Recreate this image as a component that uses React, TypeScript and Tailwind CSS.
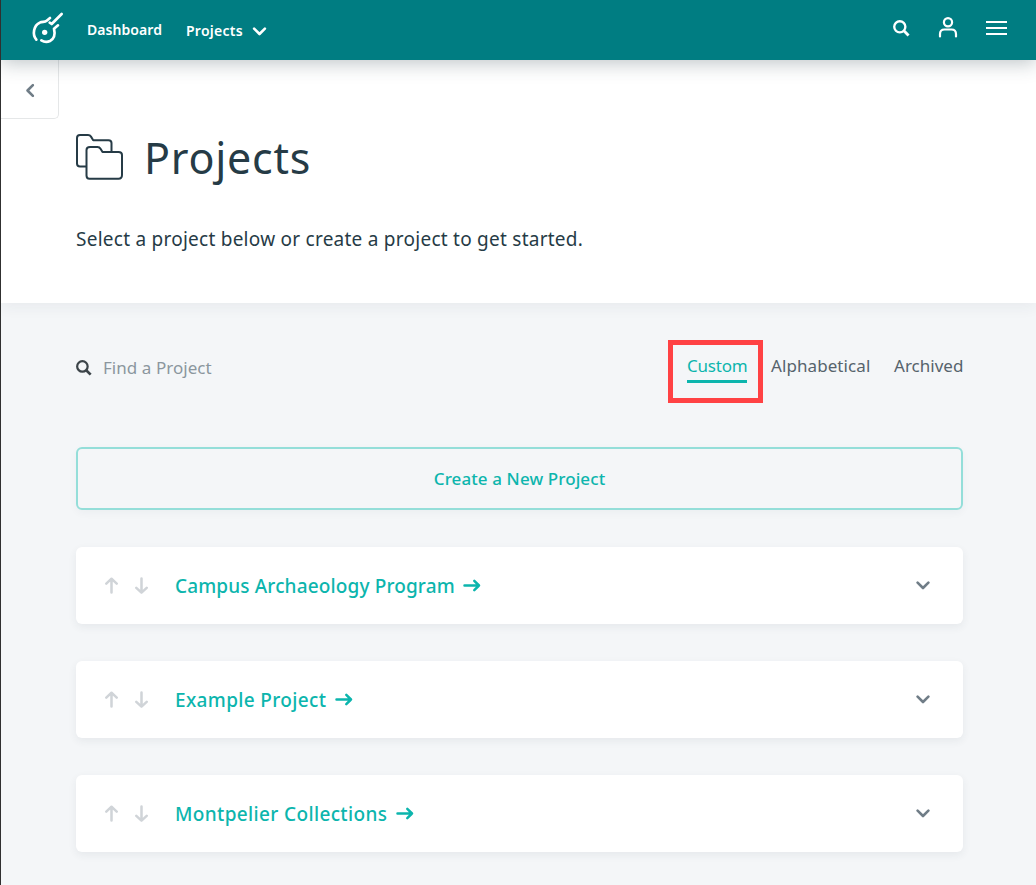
import React from "react";

const projects = [
  { name: "Campus Archaeology Program", width: "w-[280px]", tracking: "tracking-[0.14px]" },
  { name: "Example Project", width: "w-[152px]", tracking: "tracking-[0.35px]" },
  { name: "Montpelier Collections", width: "w-[213px]", tracking: "tracking-[0.36px]" },
];

function Logo() {
  return (
    <svg className="ml-[29px] h-[40px] w-[40px] shrink-0" viewBox="90 30 120 120" fill="none" stroke="white" strokeWidth="8" strokeLinecap="round" strokeLinejoin="round">
      <path d="M109 119C96 104 101 76 119 68C127 64 134 67 140 62L150 54" />
      <path d="M185 42L155 72L149 68" />
      <path d="M174 76L162 86C166 103 162 117 150 123C141 127 132 126 124 121" />
      <circle cx="134" cy="97" r="8" fill="white" stroke="none" />
    </svg>
  );
}

function Search({ className }: { className: string }) {
  return (
    <svg className={className} viewBox="0 0 18 18" fill="none" stroke="currentColor" strokeWidth="2.5">
      <circle cx="7.2" cy="7.2" r="5.9" />
      <path d="M11.5 11.5L16.5 16.5" strokeWidth="3" />
    </svg>
  );
}

function Arrow({ className }: { className: string }) {
  return (
    <svg className={className} viewBox="0 0 18 14" fill="none" stroke="currentColor" strokeWidth="2.5" strokeLinecap="round" strokeLinejoin="round">
      <path d="M1.5 6.5H16M11.3 1.8L16 6.5L11.3 11.2" />
    </svg>
  );
}

function VerticalArrow({ down = false }: { down?: boolean }) {
  return (
    <svg className="h-[18px] w-[14px] shrink-0" viewBox="0 0 14 18" fill="none" stroke="#d0d4d8" strokeWidth="2.5" strokeLinecap="round" strokeLinejoin="round">
      <path d={down ? "M7.5 1.5V15.5M2.3 10.8L7.5 15.7L12.7 10.8" : "M7.5 15.5V1.7M2.3 6.6L7.5 1.7L12.7 6.6"} />
    </svg>
  );
}

function Chevron({ className }: { className: string }) {
  return (
    <svg className={className} viewBox="0 0 14 9" fill="none" stroke="currentColor" strokeWidth="2.6" strokeLinecap="round" strokeLinejoin="round">
      <path d="M1.6 1.6L7 7L12.4 1.6" />
    </svg>
  );
}

export default function App() {
  return (
    <div className="flex h-[885px] w-[1036px] flex-col overflow-hidden border-l border-[#303030] bg-[#f4f6f8] font-['Noto_Sans',sans-serif] text-[#263b46]">
      <header className="z-10 flex h-[60px] shrink-0 items-start bg-[#007d82] text-white shadow-[0_3px_18px_rgba(38,59,70,0.3)]">
        <div className="pt-[10px]"><Logo /></div>
        <nav className="ml-[17px] flex text-[14px] leading-[20px] font-semibold whitespace-nowrap">
          <a className="mt-[20px] w-[99px] tracking-[0.06px]">Dashboard</a>
          <a className="mt-[21px] flex w-[81px] items-center justify-between tracking-[0.25px]">
            Projects <Chevron className="h-[9px] w-[15px]" />
          </a>
        </nav>
        <div className="mr-[29px] ml-auto flex h-[56px] items-center">
          <Search className="mr-[28px] h-[17px] w-[17px]" />
          <svg className="mr-[28px] h-[22px] w-[20px]" viewBox="0 0 20 22" fill="none" stroke="currentColor" strokeWidth="2.2" strokeLinecap="round">
            <circle cx="10" cy="5.2" r="4.1" />
            <path d="M2 19.5V17Q2 12.5 6.5 12.5H13.5Q18 12.5 18 17V19.5" />
          </svg>
          <svg className="h-[16px] w-[21px]" viewBox="0 0 21 16" fill="none" stroke="currentColor" strokeWidth="2">
            <path d="M0 2H21M0 8H21M0 14H21" />
          </svg>
        </div>
      </header>

      <section className="flex h-[243px] shrink-0 flex-col bg-white shadow-[0_4px_14px_rgba(38,59,70,0.06)]">
        <button className="flex h-[59px] w-[58px] items-center justify-center rounded-br-[5px] border-r border-b border-[#e5e7e8] pt-[2px] text-[#707d87]">
          <Chevron className="h-[9px] w-[14px] rotate-90" />
        </button>
        <div className="mt-[14px] ml-[75px] flex h-[50px] items-center">
          <svg className="mb-[2px] h-[46px] w-[47px]" viewBox="0 0 47 46" fill="none" stroke="#263b46" strokeWidth="2" strokeLinejoin="round">
            <path d="M10 32.5H4Q1 32.5 1 29.5V4Q1 1 4 1H12Q14 1 15 2.6L17.2 6.2H32.5Q35.5 6.2 35.5 9V17.5" />
            <path d="M14 13H21.5Q23.5 13 24.7 15L26.5 18H42.5Q46 18 46 21V41Q46 44.7 42.5 44.7H13.5Q10.5 44.7 10.5 41.5V16Q10.5 13 14 13Z" />
          </svg>
          <h1 className="ml-[21px] text-[43px] leading-[50px] font-[450] tracking-[0.75px] whitespace-nowrap">Projects</h1>
        </div>
        <p className="mt-[42px] ml-[75px] text-[19px] leading-[28px] tracking-[0.25px] whitespace-nowrap">Select a project below or create a project to get started.</p>
      </section>

      <main className="flex flex-col pr-[73px] pl-[75px]">
        <div className="mt-[37px] flex h-[63px] items-start">
          <div className="mt-[16px] flex items-center text-[17px] leading-[24px] whitespace-nowrap text-[#8b969e]">
            <Search className="mr-[11px] h-[16px] w-[16px] text-[#3c4449]" />
            <span className="tracking-[0.05px]">Find a Project</span>
          </div>
          <nav className="ml-auto flex text-[17px] leading-[24px] whitespace-nowrap text-[#56636c]">
            <div className="h-[63px] w-[95px] border-[5px] border-[#ff4244] px-[14px] pt-[9px] text-[#0cb5ad]">
              <span className="block h-[29px] w-[60px] border-b-[3px] border-[#0cb5ad] tracking-[-0.2px]">Custom</span>
            </div>
            <span className="mt-[14px] ml-[8px] w-[123px] tracking-[0.08px]">Alphabetical</span>
            <span className="mt-[14px] w-[69px] tracking-[0.02px]">Archived</span>
          </nav>
        </div>
        <button className="mt-[44px] flex h-[63px] items-center justify-center rounded-[6px] border-2 border-[#94ded9] text-[17px] font-medium tracking-[0.1px] text-[#0cb5ad] shadow-[0_3px_9px_rgba(38,59,70,0.04)]">
          Create a New Project
        </button>
        <div className="mt-[37px] flex flex-col gap-[37px]">
          {projects.map((project) => (
            <article key={project.name} className="flex h-[77px] items-center rounded-[6px] bg-white pr-[33px] pl-[28px] shadow-[0_3px_9px_rgba(38,59,70,0.07)]">
              <div className="flex gap-[16px]"><VerticalArrow /><VerticalArrow down /></div>
              <h2 className={`ml-[27px] text-[19px] leading-[28px] font-medium whitespace-nowrap text-[#0cb5ad] ${project.width} ${project.tracking}`}>{project.name}</h2>
              <Arrow className="ml-[8px] h-[14px] w-[18px] shrink-0 text-[#0cb5ad]" />
              <Chevron className="ml-auto h-[9px] w-[14px] text-[#707d87]" />
            </article>
          ))}
        </div>
      </main>
    </div>
  );
}
